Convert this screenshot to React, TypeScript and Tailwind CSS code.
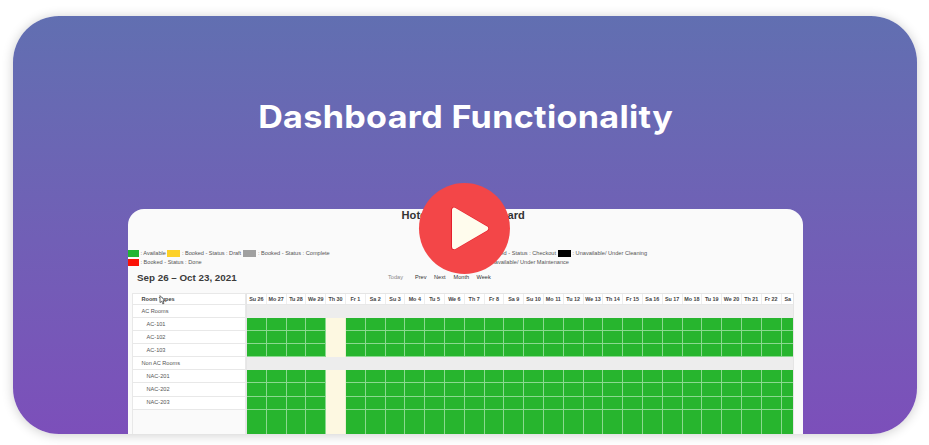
import React from 'react';

const days = ['Su 26', 'Mo 27', 'Tu 28', 'We 29', 'Th 30', 'Fr 1', 'Sa 2', 'Su 3', 'Mo 4', 'Tu 5', 'We 6', 'Th 7', 'Fr 8', 'Sa 9', 'Su 10', 'Mo 11', 'Tu 12', 'We 13', 'Th 14', 'Fr 15', 'Sa 16', 'Su 17', 'Mo 18', 'Tu 19', 'We 20', 'Th 21', 'Fr 22', 'Sa'];

const rows = [
  { name: 'AC Rooms', group: true },
  { name: 'AC-101' },
  { name: 'AC-102' },
  { name: 'AC-103' },
  { name: 'Non AC Rooms', group: true },
  { name: 'NAC-201' },
  { name: 'NAC-202' },
  { name: 'NAC-203' },
];

function Cells({ tall = false }: { tall?: boolean }) {
  return (
    <div className={`flex w-[546px] shrink-0 overflow-hidden ${tall ? 'h-[26px]' : 'h-[13.1px]'}`}>
      {days.map((d, i) => (
        <div
          key={d + i}
          className={`w-[19.81px] shrink-0 border-r ${
            i === 4
              ? 'border-r-[#e9f0d0] bg-[#fdf8e1]'
              : `border-r-[#8ad98f] bg-[#27b52e] ${tall ? '' : 'border-b border-b-[#8ad98f]'}`
          }`}
        />
      ))}
    </div>
  );
}

function Swatch({ className }: { className: string }) {
  return <span className={`h-[7px] shrink-0 ${className}`} />;
}

function Legend() {
  return (
    <div className="mt-[27px] flex h-[17px] text-[5.62px] leading-[8.5px] whitespace-nowrap text-[#555]">
      <div className="w-[338px]">
        <div className="flex h-[8.7px] items-center">
          <Swatch className="w-[10.5px] bg-[#22b534]" />
          <span className="ml-[2px] w-[26.5px]">: Available</span>
          <Swatch className="w-[13px] bg-[#fdd128]" />
          <span className="ml-[2px] w-[61px] tracking-[-0.03px]">: Booked - Status : Draft</span>
          <Swatch className="w-[13px] bg-[#a0a0a0]" />
          <span className="ml-[2px]">: Booked - Status : Complete</span>
        </div>
        <div className="flex h-[8.7px] items-center">
          <Swatch className="w-[10.5px] bg-[#fb1207]" />
          <span className="ml-[2px]">: Booked - Status : Done</span>
        </div>
      </div>
      <div>
        <div className="flex h-[8.7px] items-center">
          <span className="w-[90px] text-right">: Booked - Status : Checkout</span>
          <Swatch className="ml-[1.5px] w-[13px] bg-black" />
          <span className="ml-[2px]">: Unavailable/ Under Cleaning</span>
        </div>
        <div className="flex h-[8.7px] w-[103px] items-center justify-end">: Unavailable/ Under Maintenance</div>
      </div>
    </div>
  );
}

function Toolbar() {
  return (
    <div className="mt-[5px] flex h-[14px] items-center pl-[9px] whitespace-nowrap text-[#333]">
      <h3 className="w-[251px] text-[9.8px] leading-none font-bold text-[#3b3b3b]">Sep 26 – Oct 23, 2021</h3>
      <div className="flex text-[5.6px] leading-none">
        <span className="w-[27px] text-[#888]">Today</span>
        <span className="w-[19px]">Prev</span>
        <span className="w-[19.5px]">Next</span>
        <span className="w-[23px]">Month</span>
        <span>Week</span>
      </div>
    </div>
  );
}

function Schedule() {
  return (
    <div className="mt-[8px] ml-[4px] flex w-[662px]">
      <div className="w-[114px] shrink-0 border-x border-t border-[#e8e8e8] text-[5.6px] whitespace-nowrap text-[#555]">
        <div className="relative flex h-[10.9px] items-center border-b border-[#e8e8e8] bg-white pl-[8.5px] font-bold text-[#444]">
          Room Types
          <svg className="absolute top-[1px] left-[26px] h-[10px] w-[7px]" viewBox="0 0 7 10">
            <path d="M1 .6v7l1.7-1.4 1.1 2.7 1.2-.5-1.1-2.6h2.2z" fill="#fff" stroke="#333" strokeWidth=".7" />
          </svg>
        </div>
        {rows.map((r) => (
          <div
            key={r.name}
            className={`flex h-[13.1px] items-center border-b border-[#e8e8e8] bg-white ${r.group ? 'pl-[8.5px]' : 'pl-[13.5px]'}`}
          >
            {r.name}
          </div>
        ))}
      </div>
      <div className="w-[548px] border-t border-r border-l border-[#e5e5e5]">
        <div className="flex h-[10.9px] w-[546px] overflow-hidden border-b border-[#e8e8e8] bg-white text-[5.4px] font-bold whitespace-nowrap text-[#444]">
          {days.map((d, i) => (
            <div
              key={d + i}
              className={`flex w-[19.81px] shrink-0 items-center border-r border-[#eee] ${i === 27 ? 'pl-[3px]' : 'justify-center'}`}
            >
              {d}
            </div>
          ))}
        </div>
        {rows.map((r) =>
          r.group ? <div key={r.name} className="h-[13.1px] bg-[#ededed]" /> : <Cells key={r.name} />,
        )}
        <Cells tall />
      </div>
    </div>
  );
}

export default function App() {
  return (
    <div className="h-[445px] w-[929px] overflow-hidden bg-white pt-[16px] pl-[13px] font-['Liberation_Sans',Arial,sans-serif]">
      <main className="relative flex h-[418px] w-[904px] flex-col items-center overflow-visible rounded-[46px] bg-linear-to-b from-[#616fb1] to-[#7c4fba] shadow-[0_1px_12px_rgba(0,0,0,0.2)]">
        <h1 className="mt-[80px] h-[40px] scale-x-[1.083] pl-[1px] font-['Inter',sans-serif] text-[31.5px] leading-[41px] font-bold tracking-[0.3px] whitespace-nowrap text-white">
          Dashboard Functionality
        </h1>
        <section className="mt-[73px] ml-px h-[225px] w-[675px] overflow-hidden rounded-t-[16px] bg-[#fafafa]">
          <h2 className="h-[13px] pr-[4.5px] text-center text-[11.1px] leading-[13px] font-bold text-[#333]">
            Hotel Room Dashboard
          </h2>
          <Legend />
          <Toolbar />
          <Schedule />
        </section>
        <button aria-label="Play" className="absolute top-[167px] left-[406px] h-[91px] w-[91px] rounded-full bg-[#f34648]">
          <svg viewBox="0 0 91 91" className="h-full w-full" strokeLinejoin="round">
            <path d="M35 27v37l32-18.5z" fill="#e51e2b" stroke="#e51e2b" strokeWidth="6" />
            <path d="M35.3 27v37l31.7-18.5z" fill="#fffced" stroke="#fffced" strokeWidth="4.6" />
          </svg>
        </button>
      </main>
    </div>
  );
}
